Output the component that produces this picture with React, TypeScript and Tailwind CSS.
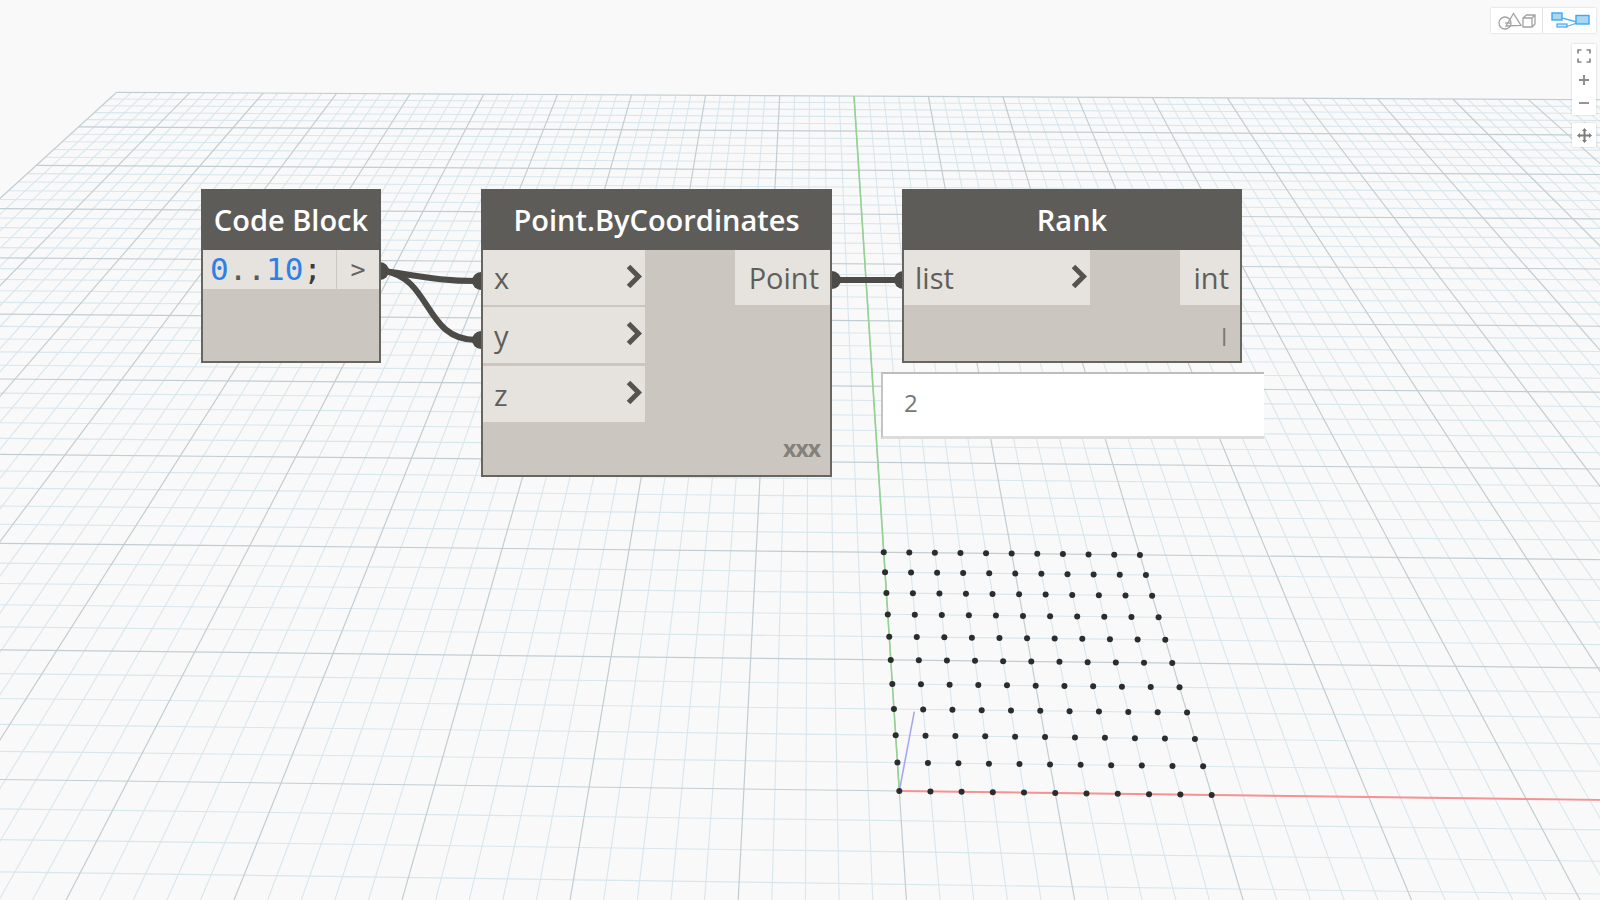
import type { ReactNode } from "react";

// perspective of the ground plane, fitted from the point grid
function project(x: number, y: number) {
  const w = 1 - 0.000349 * x + 0.02185 * y;
  return {
    x: (30.817 * x + 17.754 * y + 899.3) / w,
    y: (0.1225 * x - 11.802 * y + 791) / w,
  };
}

type Seg = { key: string; x1: number; y1: number; x2: number; y2: number; major: boolean };

function gridLines() {
  const out: Seg[] = [];
  for (let i = -50; i <= 50; i++) {
    const a = project(i, -8);
    const b = project(i, 50);
    out.push({ key: "v" + i, x1: a.x, y1: a.y, x2: b.x, y2: b.y, major: i % 5 === 0 });
    if (i >= -8) {
      const c = project(-50, i);
      const d = project(50, i);
      out.push({ key: "h" + i, x1: c.x, y1: c.y, x2: d.x, y2: d.y, major: i % 5 === 0 });
    }
  }
  return out;
}

function Viewport() {
  const lines = gridLines();
  const origin = project(0, 0);
  const xEnd = project(50, 0);
  const yEnd = project(0, 50);
  const dots = [];
  for (let i = 0; i <= 10; i++) {
    for (let j = 0; j <= 10; j++) {
      const p = project(i, j);
      dots.push(<circle key={i + "-" + j} cx={p.x} cy={p.y} r="3" fill="#2a2c2e" />);
    }
  }
  return (
    <svg className="absolute inset-0" width="1600" height="900" viewBox="0 0 1600 900">
      {lines.filter((l) => !l.major).map((l) => (
        <line key={l.key} x1={l.x1} y1={l.y1} x2={l.x2} y2={l.y2} stroke="#d8e6ee" strokeWidth="1.1" />
      ))}
      {lines.filter((l) => l.major).map((l) => (
        <line key={l.key} x1={l.x1} y1={l.y1} x2={l.x2} y2={l.y2} stroke="#c2cdd3" strokeWidth="1.2" />
      ))}
      <line x1={origin.x} y1={origin.y} x2={xEnd.x} y2={xEnd.y} stroke="#f79292" strokeWidth="1.8" />
      <line x1={origin.x} y1={origin.y} x2={yEnd.x} y2={yEnd.y} stroke="#93d293" strokeWidth="1.6" />
      <line x1={origin.x} y1={origin.y} x2="914.3" y2="711.7" stroke="#a4a4f5" strokeWidth="1.5" />
      {dots}
    </svg>
  );
}

function Wires() {
  return (
    <svg className="absolute inset-0" width="1600" height="900" viewBox="0 0 1600 900">
      <g fill="none" stroke="#4c4b48" strokeWidth="6">
        <path d="M384 271 C420 276 440 281 476 281" />
        <path d="M384 271 C432 278 424 340 476 340" />
        <path d="M832 280 L903 280" />
      </g>
      <g fill="#4c4b48">
        <circle cx="380" cy="271" r="9" />
        <circle cx="481" cy="281" r="9" />
        <circle cx="481" cy="340" r="9" />
        <circle cx="832" cy="280" r="9" />
        <circle cx="903" cy="280" r="9" />
      </g>
    </svg>
  );
}

function Chevron() {
  return (
    <svg width="17" height="25" viewBox="0 0 17 25" className="mb-[3px] ml-auto shrink-0">
      <path d="M3.5 2.5 L13.5 12.5 L3.5 22.5" fill="none" stroke="#55534f" strokeWidth="5" />
    </svg>
  );
}

function InPort({ name, className }: { name: string; className: string }) {
  return (
    <div className={"flex items-center pl-[11px] pr-[3px] bg-[#e6e3de] " + className}>
      <span className="text-[29px] leading-none text-[#5f5e5a]">{name}</span>
      <Chevron />
    </div>
  );
}

function OutPort({ name, className }: { name: string; className: string }) {
  return (
    <div className={"flex items-center justify-end pr-[11px] bg-[#e6e3de] text-[29px] leading-none text-[#5f5e5a] " + className}>
      {name}
    </div>
  );
}

function Node({ title, className, children }: { title: string; className: string; children: ReactNode }) {
  return (
    <div className={"absolute top-[189px] flex flex-col border-2 border-t-0 border-[#67655f] bg-[#cbc7c0] " + className}>
      <div className="flex h-[61px] shrink-0 -mx-[2px] items-center justify-center bg-[#5e5c58] text-[29px] font-semibold text-white">
        {title}
      </div>
      {children}
    </div>
  );
}

function ToolbarButton({ className, children }: { className?: string; children: ReactNode }) {
  return <div className={"flex items-center justify-center " + (className ?? "")}>{children}</div>;
}

function Controls() {
  return (
    <div className="absolute right-[4px] top-[8px] flex w-[105px] flex-col items-end">
      <div className="flex h-[25px] w-[105px] bg-white shadow-[0_0_2px_rgba(0,0,0,0.18)]">
        <ToolbarButton className="w-[52px] border-r border-[#e4e4e4] pb-[2px]">
          <svg width="40" height="20" viewBox="0 0 40 20" fill="none" stroke="#a2a2a2" strokeWidth="1.3">
            <circle cx="8" cy="13" r="6" />
            <path d="M8 13 L14 13" />
            <path d="M9 16 L16.5 3.5 L24 15.5 Z" />
            <path d="M26 8 L29.5 5 L38 5 L38 14 L35 17 L26 17 Z M26 8 L35 8 L35 17 M35 8 L38 5" />
          </svg>
        </ToolbarButton>
        <ToolbarButton className="flex-1 pl-[4px]">
          <svg width="42" height="20" viewBox="0 0 42 20">
            <path d="M11 7 L26 11 M14 16 L26 12" stroke="#52b4f2" strokeWidth="1.3" fill="none" />
            <rect x="1" y="2" width="10" height="7" fill="#a9d8f5" stroke="#3fa9f0" strokeWidth="1.4" />
            <rect x="6" y="13" width="10" height="3" fill="#d4ecfa" stroke="#3fa9f0" strokeWidth="1.2" />
            <rect x="25" y="4.5" width="13" height="8.5" fill="#a9d8f5" stroke="#3fa9f0" strokeWidth="1.4" />
          </svg>
        </ToolbarButton>
      </div>
      <div className="mt-[11px] flex h-[71px] w-[24px] flex-col items-center bg-white shadow-[0_0_2px_rgba(0,0,0,0.18)]">
        <svg width="14" height="14" viewBox="0 0 14 14" fill="none" stroke="#8a8a8a" strokeWidth="1.7" className="mt-[5px]">
          <path d="M1 4.5 V1 H4.5 M9.5 1 H13 V4.5 M13 9.5 V13 H9.5 M4.5 13 H1 V9.5" />
        </svg>
        <svg width="12" height="12" viewBox="0 0 12 12" fill="none" stroke="#8a8a8a" strokeWidth="1.8" className="mt-[11px]">
          <path d="M6 1 V11 M1 6 H11" />
        </svg>
        <svg width="12" height="12" viewBox="0 0 12 12" fill="none" stroke="#8a8a8a" strokeWidth="1.8" className="mt-[11px]">
          <path d="M1 6 H11" />
        </svg>
      </div>
      <div className="mt-[8px] flex h-[24px] w-[24px] items-center justify-center bg-white shadow-[0_0_2px_rgba(0,0,0,0.18)]">
        <svg width="15" height="15" viewBox="0 0 15 15" fill="#7c7c7c">
          <path d="M7.5 2 V13 M2 7.5 H13" stroke="#7c7c7c" strokeWidth="2" />
          <path d="M7.5 0 L10 3 H5 Z M7.5 15 L10 12 H5 Z M0 7.5 L3 5 V10 Z M15 7.5 L12 5 V10 Z" />
        </svg>
      </div>
    </div>
  );
}

export default function App() {
  return (
    <div className="relative h-[900px] w-[1600px] overflow-hidden bg-[#f9f9f9] font-['Open_Sans',sans-serif]">
      <Viewport />
      <Wires />

      <Node title="Code Block" className="left-[201px] h-[174px] w-[180px]">
        <div className="flex h-[39px] gap-[1px]">
          <div className="flex w-[133px] items-center bg-[#e6e3de] pl-[7px] font-['DejaVu_Sans_Mono',monospace] text-[31px] leading-none">
            <span className="text-[#2f80e4]">0</span>
            <span className="text-[#5b5a56]">..</span>
            <span className="text-[#2f80e4]">10</span>
            <span className="text-[#3c3b38]">;</span>
          </div>
          <div className="flex flex-1 items-center justify-center bg-[#e6e3de] font-['DejaVu_Sans_Mono',monospace] text-[25px] leading-none text-[#66645f]">
            &gt;
          </div>
        </div>
      </Node>

      <Node title="Point.ByCoordinates" className="left-[481px] h-[288px] w-[351px]">
        <div className="flex items-start justify-between">
          <div className="flex w-[162px] flex-col">
            <InPort name="x" className="h-[55px]" />
            <InPort name="y" className="mt-[2px] h-[56px]" />
            <InPort name="z" className="mt-[3px] h-[56px]" />
          </div>
          <OutPort name="Point" className="h-[55px] w-[95px]" />
        </div>
        <div className="mt-auto pb-[15px] pr-[10px] text-right text-[23px] font-bold leading-none tracking-[-1px] text-[#84817c]">
          xxx
        </div>
      </Node>

      <Node title="Rank" className="left-[902px] h-[174px] w-[340px]">
        <div className="flex items-start justify-between">
          <InPort name="list" className="h-[55px] w-[186px]" />
          <OutPort name="int" className="h-[55px] w-[60px]" />
        </div>
        <div className="mt-auto pb-[12px] pr-[13px] text-right text-[23px] leading-none text-[#7a7874]">l</div>
      </Node>

      <div className="absolute left-[881px] top-[372px] flex h-[67px] w-[383px] items-center border-b-[3px] border-l-2 border-t-2 border-b-[#dcdcdc] border-l-[#c4c4c4] border-t-[#bdbdbd] bg-white pb-[5px] pl-[21px] text-[24px] text-[#77767a]">
        2
      </div>

      <Controls />
    </div>
  );
}
